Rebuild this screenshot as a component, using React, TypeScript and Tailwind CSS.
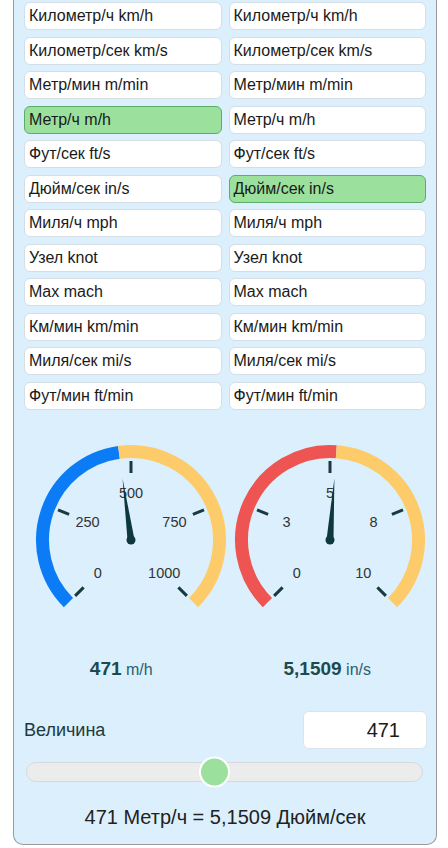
import React from "react";

const units = [
  "Километр/ч km/h",
  "Километр/сек km/s",
  "Метр/мин m/min",
  "Метр/ч m/h",
  "Фут/сек ft/s",
  "Дюйм/сек in/s",
  "Миля/ч mph",
  "Узел knot",
  "Max mach",
  "Км/мин km/min",
  "Миля/сек mi/s",
  "Фут/мин ft/min",
];

const polar = (cx: number, cy: number, r: number, deg: number) => {
  const a = (deg * Math.PI) / 180;
  return [cx + r * Math.sin(a), cy - r * Math.cos(a)];
};

const arc = (cx: number, cy: number, r: number, from: number, to: number) => {
  const [x1, y1] = polar(cx, cy, r, from);
  const [x2, y2] = polar(cx, cy, r, to);
  const large = to - from > 180 ? 1 : 0;
  return `M ${x1} ${y1} A ${r} ${r} 0 ${large} 1 ${x2} ${y2}`;
};

type GaugeProps = {
  cx: number;
  value: number;
  max: number;
  color: string;
  labels: string[];
};

const Gauge = ({ cx, value, max, color, labels }: GaugeProps) => {
  const cy = 110;
  const angle = -135 + (value / max) * 270;
  const ticks = [-135, -67.5, 0, 67.5, 135];
  const [tx, ty] = polar(cx, cy, 62, angle);
  const [b1x, b1y] = polar(cx, cy, 3.5, angle - 90);
  const [b2x, b2y] = polar(cx, cy, 3.5, angle + 90);
  return (
    <svg width="197" height="190" viewBox="0 0 197 190" className="block overflow-visible">
      <path d={arc(cx, cy, 88.5, -135, angle)} fill="none" stroke={color} strokeWidth="13" />
      <path d={arc(cx, cy, 88.5, angle, 135)} fill="none" stroke="#fecb6a" strokeWidth="13" />
      {ticks.map((t) => {
        const [x1, y1] = polar(cx, cy, 67, t);
        const [x2, y2] = polar(cx, cy, 79, t);
        return <line key={t} x1={x1} y1={y1} x2={x2} y2={y2} stroke="#183a3f" strokeWidth="3" />;
      })}
      {ticks.map((t, i) => {
        const [x, y] = polar(cx, cy, 47, t);
        return (
          <text
            key={t}
            x={x}
            y={y + 5}
            textAnchor="middle"
            fontSize="14.5"
            fill="#333"
            fontFamily="'Liberation Sans', Arial, sans-serif"
          >
            {labels[i]}
          </text>
        );
      })}
      <polygon points={`${b1x},${b1y} ${tx},${ty} ${b2x},${b2y}`} fill="#0e383c" />
      <circle cx={cx} cy={cy} r="4.5" fill="#0e383c" />
    </svg>
  );
};

export default function App() {
  return (
    <div className="min-h-screen bg-white font-['Liberation_Sans',Arial,sans-serif]">
      <div className="ml-[13px] w-[424px] rounded-b-[10px] border border-t-0 border-[#9a9a9a] bg-[#dbf0fc] px-[10px] pt-[2px] pb-[13px]">
        {/* unit pickers: from / to */}
        <div className="grid grid-cols-2 gap-x-[7px] gap-y-[6.5px]">
          {units.map((u, i) => (
            <React.Fragment key={u}>
              <div
                className={`flex h-[28px] items-center rounded-[6px] border px-[4px] text-[16px] text-[#1a1a1a] ${
                  i === 3 ? "border-[#5bae68] bg-[#9be09d]" : "border-[#d5dee5] bg-white"
                }`}
              >
                {u}
              </div>
              <div
                className={`flex h-[28px] items-center rounded-[6px] border px-[4px] text-[16px] text-[#1a1a1a] ${
                  i === 5 ? "border-[#5bae68] bg-[#9be09d]" : "border-[#d5dee5] bg-white"
                }`}
              >
                {u}
              </div>
            </React.Fragment>
          ))}
        </div>

        {/* gauges */}
        <div className="mt-[20.5px] grid grid-cols-2 gap-x-[7px]">
          <Gauge cx={107} value={471} max={1000} color="#0b7cf6" labels={["0", "250", "500", "750", "1000"]} />
          <Gauge cx={101} value={5.1509} max={10} color="#ed5452" labels={["0", "3", "5", "8", "10"]} />
        </div>

        <div className="mt-[37px] grid grid-cols-2 gap-x-[7px] leading-[24px]">
          <div className="pr-[3px] text-center">
            <span className="text-[19px] font-bold text-[#1b4a4f]">471</span>{" "}
            <span className="text-[16px] text-[#2a5f6c]">m/h</span>
          </div>
          <div className="text-center">
            <span className="text-[19px] font-bold text-[#1b4a4f]">5,1509</span>{" "}
            <span className="text-[16px] text-[#2a5f6c]">in/s</span>
          </div>
        </div>

        {/* value input */}
        <div className="mt-[29px] flex items-center justify-between">
          <span className="text-[18px] text-[#1d3a40]">Величина</span>
          <div className="mr-[-1px] flex h-[38px] w-[124px] items-center justify-end rounded-[6px] border border-[#dde3e8] bg-white pr-[26px] text-[20px] text-[#1a1a1a]">
            471
          </div>
        </div>

        {/* slider */}
        <div className="relative mt-[13px] ml-[2px] h-[20px] w-[397px] rounded-full border border-[#d6d9dc] bg-[#ececec]">
          <div className="absolute top-1/2 left-[172px] h-[31px] w-[31px] -translate-y-1/2 rounded-full border-2 border-white bg-[#9be09c]" />
        </div>

        <div className="mt-[22px] text-center text-[20px] leading-[27px] text-[#222]">
          471 Метр/ч = 5,1509 Дюйм/сек
        </div>
      </div>
    </div>
  );
}
